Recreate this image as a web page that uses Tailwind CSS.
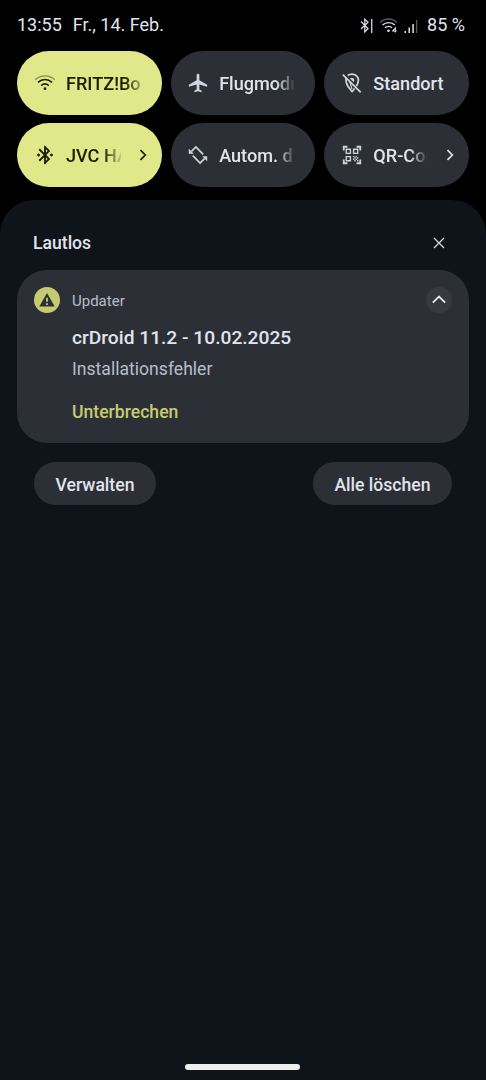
<!DOCTYPE html>
<html lang="de">
<head>
    <meta charset="UTF-8">
    <meta name="viewport" content="width=device-width, initial-scale=1.0">
    <title>Benachrichtigungen</title>
    <script src="https://cdn.jsdelivr.net/npm/@tailwindcss/browser@4"></script>
</head>
<body class="h-screen flex flex-col overflow-hidden bg-black font-['Roboto',sans-serif] text-[#e1e4ed]">
    <!-- status bar -->
    <header class="h-[51px] shrink-0 flex items-center pb-px pl-[17px] pr-[22px] text-[18px] leading-none whitespace-nowrap">
        <span>13:55</span>
        <span class="ml-[11px]">Fr., 14. Feb.</span>
        <div class="ml-auto flex items-center">
            <svg class="w-[13px] h-[18px]" viewBox="0 0 13 18" fill="none" stroke="#d5d8e1" stroke-width="1.3">
                <path d="M1 5.500l7 7L4.800 15.800V3.200L8 6.200L1 13" /><path d="M11.700 3v14" />
            </svg>
            <svg class="ml-[6px] w-[20px] h-[18px]" viewBox="0 0 20 18" fill="none" stroke="#dfe2ea" stroke-width="1.4">
                <path d="M1.200 6.400C6 1.800 13 1.800 17.800 6.400" stroke="#55575d" /><path d="M3.500 9.100C7 5.800 12.500 5.800 15.800 9.100M6 11.800C8 10 11 10 13 11.800" />
                <circle cx="9.500" cy="14.800" r="1.300" fill="#dfe2ea" stroke="none" />
                <path d="M16.300 16.500V12l-2.500 3h3.800" stroke-width="1.100" />
            </svg>
            <svg class="ml-[5px] w-[14px] h-[18px]" viewBox="0 0 14 18" fill="#dfe2ea">
                <path d="M.500 15h1.500V17H.500zM4.500 11.500H6V17H4.500zM8.300 8h1.500v9H8.300z" /><path d="M12 4h1.300v13H12z" fill="#55575d" />
            </svg>
            <span class="ml-[9px] -mr-px">85 %</span>
        </div>
    </header>

    <!-- quick settings -->
    <div class="shrink-0 grid grid-cols-3 gap-x-[9px] gap-y-2 px-[17px] text-[18.1px] font-medium whitespace-nowrap">
        <div class="h-16 rounded-[32px] bg-[#e1e88a] text-[#1b1d00] flex items-center pl-[17px] pr-5">
            <svg class="w-[22px] h-[22px] shrink-0" viewBox="0 0 22 22" fill="none" stroke="currentColor" stroke-width="1.6">
                <path d="M1.300 7.800C7 2.600 15 2.600 20.700 7.800" stroke-width="1.300" class="opacity-45" />
                <path d="M4 10.400C8.200 6.500 13.800 6.500 18 10.400M7.200 13.600C9.500 11.500 12.500 11.500 14.800 13.600" /><circle cx="11" cy="16.700" r="1.400" fill="currentColor" stroke="none" />
            </svg>
            <span class="ml-[10px] pt-0.5 w-[75px] overflow-hidden mask-r-from-78% mask-r-to-110%">FRITZ!Box</span>
        </div>
        <div class="h-16 rounded-[32px] bg-[#2c3036] flex items-center pl-[16.500px] pr-5">
            <svg class="w-[22px] h-[22px] shrink-0 text-[#d0d4e0]" viewBox="0 0 24 24" fill="currentColor">
                <path d="M22 16v-2l-8.500-5V3.500C13.500 2.670 12.830 2 12 2s-1.500.67-1.500 1.500V9L2 14v2l8.500-2.500V19L8 20.500V22l4-1 4 1v-1.500L13.500 19v-5.500L22 16z" />
            </svg>
            <span class="ml-[10px] pt-0.5 w-[75px] overflow-hidden mask-r-from-76% mask-r-to-102%">Flugmodus</span>
        </div>
        <div class="h-16 rounded-[32px] bg-[#2c3036] flex items-center pl-[17px] pr-5">
            <svg class="w-[22px] h-[22px] shrink-0 text-[#d0d4e0]" viewBox="0 0 24 24" fill="none" stroke="currentColor" stroke-width="1.900">
                <path d="M2 2.800L21.500 22.200M7.300 3.800C8.600 2.700 10.200 2.200 12 2.200c4 0 7 3 7 6.900 0 2-.9 4.200-2.200 6.400M5.500 7C4.500 12 8 17 12 21.300c1-1 2-2.200 2.900-3.400" />
                <path d="M10.500 7.200a2.200 2.200 0 0 1 3.200 2.800z" fill="currentColor" stroke-width="1.200" />
                <path d="M9.500 10.500l2.500 8" stroke-width="1.300" />
            </svg>
            <span class="ml-[10px] pt-0.5">Standort</span>
        </div>
        <div class="h-16 rounded-[32px] bg-[#e1e88a] text-[#1b1d00] flex items-center pl-[17px] pr-[14px]">
            <svg class="w-[22px] h-[22px] shrink-0" viewBox="0 0 24 24" fill="currentColor">
                <path d="M7 12l-2-2-2 2 2 2 2-2zm10.710-4.290L12 2h-1v7.590L6.410 5 5 6.410 10.590 12 5 17.590 6.410 19 11 14.410V22h1l5.710-5.710-4.300-4.290 4.300-4.290zM13 5.830l1.880 1.880L13 9.590V5.830zm1.880 10.460L13 18.170v-3.760l1.880 1.880zM19 10l-2 2 2 2 2-2-2-2z" />
            </svg>
            <span class="ml-[10px] pt-0.5 w-[55px] overflow-hidden mask-r-from-68% mask-r-to-105%">JVC HA-S</span>
            <svg class="ml-auto w-[10px] h-[12px]" viewBox="0 0 10 12" fill="none" stroke="currentColor" stroke-width="1.700"><path d="M2.500 1.200L7.300 6l-4.800 4.800" /></svg>
        </div>
        <div class="h-16 rounded-[32px] bg-[#2c3036] flex items-center pl-[16.500px] pr-5">
            <svg class="w-[22px] h-[22px] shrink-0 text-[#d0d4e0]" viewBox="0 0 22 22" fill="none" stroke="currentColor" stroke-width="1.700">
                <path d="M4.500 7.300L8.900 3l7.300 7.300M17.500 14.700L13.100 19l-7.300-7.300" />
                <path d="M1.800 4.800v5h5zM20.200 17.200v-5h-5z" fill="currentColor" stroke="none" />
            </svg>
            <span class="ml-[10px] pt-0.5 w-[74px] overflow-hidden mask-r-from-78% mask-r-to-104%">Autom. drehen</span>
        </div>
        <div class="h-16 rounded-[32px] bg-[#2c3036] flex items-center pl-[17px] pr-[14px]">
            <svg class="w-[22px] h-[22px] shrink-0 text-[#d0d4e0]" viewBox="0 0 24 24" fill="currentColor">
                <path d="M9.500 6.500v3h-3v-3h3M11 5H5v6h6V5zm-1.500 9.500v3h-3v-3h3M11 13H5v6h6v-6zm6.500-6.500v3h-3v-3h3M19 5h-6v6h6V5zm-6 8h1.500v1.500H13V13zm1.500 1.500H16V16h-1.500v-1.500zM16 13h1.500v1.500H16V13zm-3 3h1.500v1.500H13V16zm1.500 1.500H16V19h-1.500v-1.500zM16 16h1.500v1.500H16V16zm1.500-1.500H19V16h-1.500v-1.500zm0 3H19V19h-1.500v-1.500zM22 7h-2V4h-3V2h5v5zm0 15v-5h-2v3h-3v2h5zM2 22h5v-2H4v-3H2v5zM2 2v5h2V4h3V2H2z" />
            </svg>
            <span class="ml-[10px] pt-0.5 w-[55px] overflow-hidden mask-r-from-66% mask-r-to-100%">QR-Code</span>
            <svg class="ml-auto w-[10px] h-[12px]" viewBox="0 0 10 12" fill="none" stroke="currentColor" stroke-width="1.700"><path d="M2.500 1.200L7.300 6l-4.800 4.800" /></svg>
        </div>
    </div>

    <!-- notification shade -->
    <main class="mt-[13px] flex-1 flex flex-col rounded-t-[34px] bg-[#0f141b] px-[17px]">
        <div class="h-[70px] shrink-0 flex items-center justify-between pt-4 pl-4 pr-[24px]">
            <h1 class="pt-px text-[17.6px] font-medium">Lautlos</h1>
            <svg class="w-[12px] h-[12px] -mt-px" viewBox="0 0 12 12" fill="none" stroke="#d4d8e4" stroke-width="1.300"><path d="M1 1l10 10M11 1L1 11" /></svg>
        </div>
        <section class="h-[173px] shrink-0 rounded-[30px] bg-[#2c3036] pt-[17px] pl-[17px] pr-[17px]">
            <div class="h-[26px] flex items-center">
                <div class="w-[26px] h-[26px] rounded-full bg-[#c5cb70] flex items-center justify-center">
                    <svg class="w-[16px] h-[14px] -mt-px" viewBox="0 0 16 14">
                        <path d="M8 0l7.700 13.500H.300z" fill="#2c3036" /><path d="M7.100 4.800h1.800v4H7.100zM7.100 10.200h1.800v1.700H7.100z" fill="#c5cb70" />
                    </svg>
                </div>
                <span class="ml-[12px] pt-0.5 text-[15px] text-[#b9bdca]">Updater</span>
                <div class="ml-auto w-[26px] h-[26px] rounded-full bg-[#373a41] flex items-center justify-center">
                    <svg class="w-[14px] h-[9px] -mt-0.5" viewBox="0 0 14 9" fill="none" stroke="#e6e8f0" stroke-width="1.800"><path d="M.800 7.700L7 1.500l6.200 6.200" /></svg>
                </div>
            </div>
            <div class="pl-[38px]">
                <h2 class="mt-[13px] text-[19.200px] leading-6 font-medium">crDroid 11.2 - 10.02.2025</h2>
                <p class="mt-[7px] text-[17.600px] leading-6 text-[#b9bdca]">Installationsfehler</p>
                <button class="mt-[19px] block text-[17.600px] leading-6 font-medium text-[#c5cb70]">Unterbrechen</button>
            </div>
        </section>
        <div class="mt-[19px] px-[17px] flex justify-between text-[17.600px] font-medium">
            <button class="w-[122px] h-[43px] pt-[3px] rounded-full bg-[#2c3036]">Verwalten</button>
            <button class="w-[139px] h-[43px] pt-[3px] rounded-full bg-[#2c3036]">Alle löschen</button>
        </div>
        <!-- gesture bar -->
        <div class="mt-auto mb-[10px] mr-px self-center w-[115px] h-[6px] rounded-full bg-[#eeeeef]"></div>
    </main>
</body>
</html>
